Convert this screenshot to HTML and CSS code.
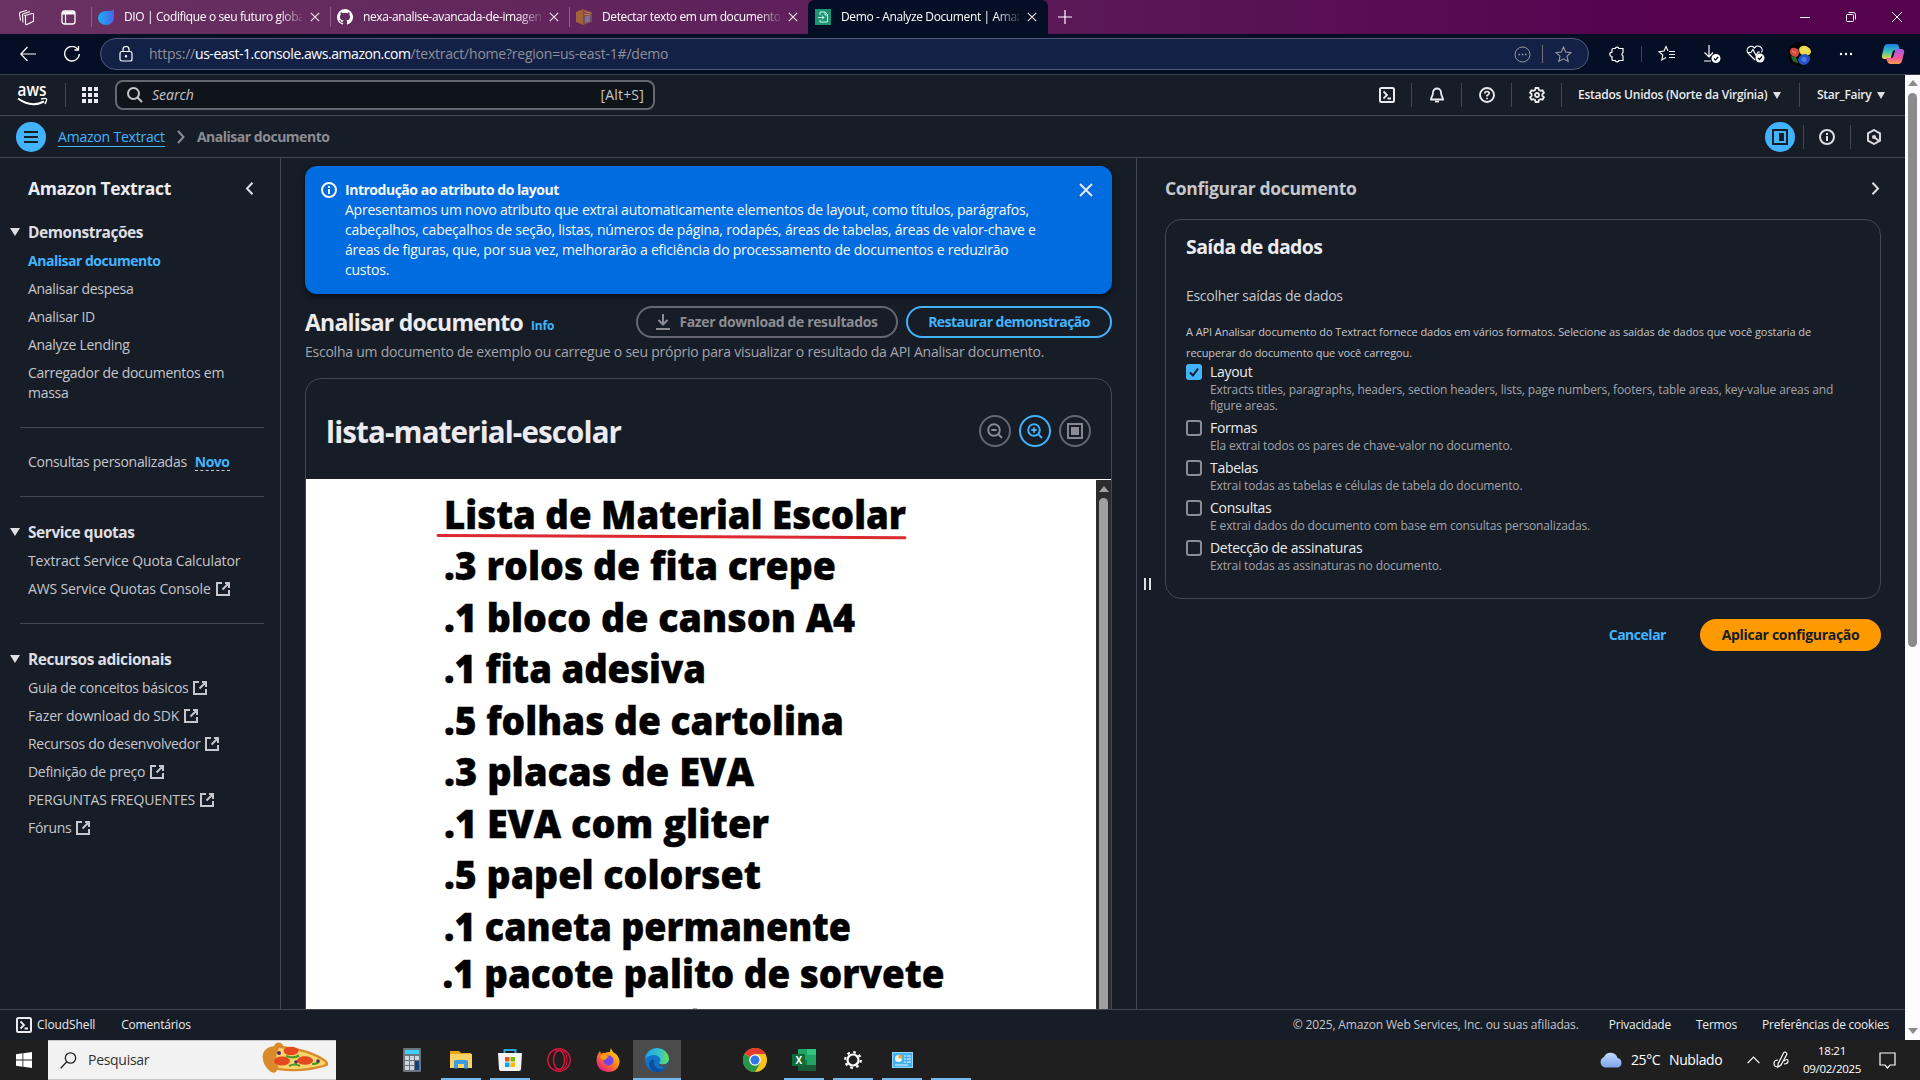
FILE: index.html
```html
<!DOCTYPE html>
<html lang="pt-BR">
<head>
<meta charset="utf-8">
<title>Demo - Analyze Document | Amazon Textract</title>
<link rel="stylesheet" href="styles.css">
</head>
<body>
<svg class="defs" aria-hidden="true">
  <symbol id="ext" viewBox="0 0 16 16"><path d="M7 2H2v12h12V9M10 2h4v5M14 2 7.5 8.5" fill="none" stroke="currentColor" stroke-width="2"/></symbol>
  <symbol id="x" viewBox="0 0 10 10"><path d="M.8.8l8.4 8.4M9.2.8.8 9.2" fill="none" stroke="currentColor" stroke-width="1.2"/></symbol>
  <symbol id="shell" viewBox="0 0 16 16"><rect x="1" y="1" width="14" height="14" rx="1.5" fill="none" stroke="currentColor" stroke-width="2"/><path d="M4.500 4.500 8 8l-3.500 3.500M8.500 11.500h3.500" fill="none" stroke="currentColor" stroke-width="1.800"/></symbol>
  <symbol id="info" viewBox="0 0 16 16"><circle cx="8" cy="8" r="7" fill="none" stroke="currentColor" stroke-width="2"/><path d="M8 7v5M8 4v2" stroke="currentColor" stroke-width="2"/></symbol>
</svg>

<header class="tabs">
  <div class="tabs-lead">
    <svg width="17" height="17" viewBox="0 0 17 17" fill="none" stroke="#fff" stroke-width="1.100"><path d="M7 6.500 14 4.500q1.500-.300 1.500 1v6q0 1-1 1.300l-5.500 2.700q-1.500.500-1.500-1v-7q0-.800-.500-1zM5 13.500l-.500-7.500q0-1 1-1.300L12 2.500M2.500 11.500 1.500 5q-.200-1.300 1-1.700L9 1.200"/></svg>
    <svg width="15" height="15" viewBox="0 0 15 15" fill="none" stroke="#fff"><rect x="1" y="1" width="13" height="13" rx="2.500" stroke-width="1.300"/><path d="M1 3h13" stroke-width="3"/><path d="M4.500 4v10" stroke-width="1.200"/></svg>
  </div>
  <div class="tab">
    <svg class="fav" viewBox="0 0 16 16"><defs><linearGradient id="g1"><stop offset="0" stop-color="#1ab0f5"/><stop offset="1" stop-color="#4b62e8"/></linearGradient></defs><path d="M16 .5V9A8 7 0 1 1 8 2Q13 2.500 16 .5z" fill="url(#g1)"/></svg>
    <span class="tab-name">DIO | Codifique o seu futuro globa</span><svg class="x"><use href="#x"/></svg>
  </div>
  <div class="tab">
    <svg class="fav" viewBox="0 0 16 16"><path fill="#fff" d="M8 0a8 8 0 0 0-2.530 15.590c.4.070.550-.170.550-.380l-.010-1.490c-2 .370-2.530-.490-2.690-.940-.090-.230-.480-.940-.820-1.130-.280-.150-.680-.520-.010-.530.630-.010 1.080.580 1.230.820.720 1.210 1.870.870 2.330.660.070-.520.280-.870.510-1.070-1.780-.2-3.640-.890-3.640-3.950 0-.870.310-1.590.820-2.150-.080-.2-.360-1.020.080-2.120 0 0 .670-.210 2.200.820a7.400 7.400 0 0 1 4 0c1.530-1.040 2.200-.820 2.200-.820.440 1.100.160 1.920.080 2.120.510.560.820 1.270.820 2.150 0 3.070-1.870 3.750-3.650 3.950.290.250.540.730.540 1.480l-.010 2.200c0 .210.150.460.550.380A8 8 0 0 0 8 0z"/></svg>
    <span class="tab-name">nexa-analise-avancada-de-imagen</span><svg class="x"><use href="#x"/></svg>
  </div>
  <div class="tab">
    <svg class="fav" viewBox="0 0 16 16"><path d="M0 3 7 0v16l-7-3z" fill="#a4623a"/><path d="M7 0l9 3v10l-9 3z" fill="#7d4b50"/><path d="M8 2.500l7 1.500M8 5.500l6 0" stroke="#c57b45"/><path d="M9 7l5-.5v6L9 14z" fill="#7773a8"/></svg>
    <span class="tab-name">Detectar texto em um documento</span><svg class="x"><use href="#x"/></svg>
  </div>
  <div class="tab tab-on">
    <svg class="fav" viewBox="0 0 16 16"><path fill="#1f9474" d="M0 0h16v16H0z"/><path d="M5 6V3h5l2.500 2.500V13H5v-2M10 3v3h2.500M3 8.500h6M7 6.500l2 2-2 2" fill="none" stroke="#c9f5e6"/></svg>
    <span class="tab-name">Demo - Analyze Document | Amaz</span><svg class="x"><use href="#x"/></svg>
  </div>
  <svg class="plus" viewBox="0 0 14 14"><path d="M7 0v14M0 7h14" stroke="#fff" stroke-width="1.200"/></svg>
  <div class="win">
    <svg width="46" height="34" stroke="#fff"><path d="M18 17.500h10"/></svg>
    <svg width="46" height="34" fill="none" stroke="#fff"><rect x="18.500" y="14.500" width="7" height="7" rx="1"/><path d="M20.500 12.500h5q2 0 2 2v5"/></svg>
    <svg width="46" height="34" stroke="#fff"><path d="M18 12l10 10M28 12 18 22"/></svg>
  </div>
</header>

<div class="toolbar">
  <svg class="nav1" viewBox="0 0 16 16" fill="none" stroke="#fff" stroke-width="1.200"><path d="M16 8H1M7.500 1 .8 8l6.700 7"/></svg>
  <svg class="nav2" viewBox="0 0 16 16" fill="none" stroke="#fff" stroke-width="1.300"><path d="M14 3.500A7.300 7.300 0 1 0 15.300 8M14.500 0v4h-4"/></svg>
  <div class="address">
    <svg width="14" height="16" viewBox="0 0 14 16" fill="none" stroke="#fff" stroke-width="1.200"><rect x="1" y="5.500" width="12" height="9.500" rx="2"/><path d="M4 5.500V3.500a3 3 0 0 1 6 0v2"/><circle cx="7" cy="10.300" r=".6" fill="#fff"/></svg>
    <span class="url">https://<b>us-east-1.console.aws.amazon.com</b>/textract/home?region=us-east-1#/demo</span>
    <svg width="17" height="17" viewBox="0 0 17 17" fill="none" stroke="#9b99a0"><circle cx="8.500" cy="8.500" r="7.500"/><path d="M4.500 8.500h1.600M7.700 8.500h1.600M10.900 8.500h1.600" stroke-width="1.600"/></svg>
    <i class="asep"></i>
    <svg width="17" height="17" viewBox="0 0 17 17" fill="none" stroke="#9b99a0" stroke-width="1.100"><path d="M8.500 1l2.200 5 5.300.6-4 3.600 1.200 5.300-4.700-2.700-4.700 2.700L5 10.200 1 6.600 6.300 6z"/></svg>
  </div>
  <div class="tools">
    <svg width="18" height="18" viewBox="0 0 18 18" fill="none" stroke="#fff" stroke-width="1.200"><path d="M5 3.500h2.200a2 2 0 0 1 3.800 0H15V7.500a2 2 0 0 0 0 3.500V15.500H11a2 2 0 0 1-3.800 0H5q-1 0-1-1V11.500a2.200 2.200 0 0 1 0-4.400V4.500q0-1 1-1z"/></svg>
    <i class="tsep"></i>
    <svg width="18" height="18" viewBox="0 0 18 18" fill="none" stroke="#fff" stroke-width="1.100"><path d="M10 6 8 1.500 6 6l-5 .6 3.800 3.400L3.800 15 8 12.600M11 6.500h6M11 9.500h6M11 12.500h6"/></svg>
    <svg width="18" height="20" viewBox="0 0 18 20" fill="none" stroke="#fff" stroke-width="1.200"><path d="M6 1v12M1.500 8.500 6 13l4-4.500M1 17h7"/><circle cx="13" cy="14.500" r="4.500" fill="#fff" stroke="none"/><path d="M11 14.500l1.500 1.500 2.600-3" stroke="#050e25"/></svg>
    <svg width="19" height="18" viewBox="0 0 19 18" fill="none" stroke="#fff" stroke-width="1.200"><path d="M9 15 2 8A4 4 0 0 1 8.500 3 4 4 0 0 1 15.500 7.500M1 7.500h4l2-3 3 6 2-3.500h2"/><circle cx="14" cy="13" r="4.500" fill="#fff" stroke="none"/><path d="M12 13l1.500 1.500 2.600-3" stroke="#050e25"/></svg>
    <svg width="24" height="24" viewBox="0 0 24 24"><circle cx="12" cy="12" r="12" fill="#050505"/><path d="M2 9q1-4 5-3 4 1 4 4 0 5-4 5-5-1-5-6z" fill="#d8493e"/><path d="M11 7q2-4 7-3 5 2 5 6-1 4-6 3.500Q11 13 11 7z" fill="#e9dc4b"/><path d="M3 14l5 1 2 6q-6 0-7-7z" fill="#1f6a2e"/><path d="M10 17q2-5 8-5 5 2 4 6-2 5-7 5-5-1-5-6z" fill="#2350c4"/><circle cx="16" cy="17.500" r="2.500" fill="#4b7ae6"/><path d="M15 6l4 3M4 9l4 2" stroke="#fff" fill="none" opacity=".4"/></svg>
    <svg width="14" height="4" fill="#fff"><circle cx="2" cy="2" r="1.200"/><circle cx="7" cy="2" r="1.200"/><circle cx="12" cy="2" r="1.200"/></svg>
    <svg width="24" height="22" viewBox="0 0 24 22"><defs><linearGradient id="c1" x2="0" y2="1"><stop offset="0" stop-color="#1b7be8"/><stop offset=".5" stop-color="#36c3b5"/><stop offset="1" stop-color="#f4d53a"/></linearGradient><linearGradient id="c2" x2="0" y2="1"><stop offset="0" stop-color="#a65cf0"/><stop offset=".6" stop-color="#f0569a"/><stop offset="1" stop-color="#ff9a4c"/></linearGradient></defs><path d="M6 1h9q2.500 0 3 3l.8 3H14q-2 0-2.500 2L9.500 16H4Q0 16 1 12L3 4q.800-3 3-3z" fill="url(#c1)"/><path d="M18 21H9q-2 0-3-3l-1-3h5q2 0 2.500-2l2-7H20q4 0 3 4l-2 8q-.800 3-3 3z" fill="url(#c2)"/></svg>
  </div>
</div>

<div class="viewport">
<div class="page">
  <div class="awsbar">
    <svg class="awslogo" viewBox="0 0 31 21"><text x="0.500" y="10.500" class="awsword" textLength="29" lengthAdjust="spacingAndGlyphs">aws</text><path d="M1 13.500q13 9.500 26 3" fill="none" stroke="#fff" stroke-width="2"/><path d="M24 14q5-1 5.500 0t-1.500 5" fill="none" stroke="#fff" stroke-width="1.400"/></svg>
    <i class="vsep"></i>
    <svg class="apps" viewBox="0 0 16 16" fill="#ebebf0"><path d="M0 0h4v4H0zM6 0h4v4H6zM12 0h4v4h-4zM0 6h4v4H0zM6 6h4v4H6zM12 6h4v4h-4zM0 12h4v4H0zM6 12h4v4H6zM12 12h4v4h-4z"/></svg>
    <div class="search">
      <svg width="16" height="16" viewBox="0 0 16 16" fill="none" stroke="#c6c6cd" stroke-width="2"><circle cx="6.500" cy="6.500" r="5.500"/><path d="M10.500 10.500 15 15"/></svg>
      <em>Search</em><span>[Alt+S]</span>
    </div>
    <div class="awsright">
      <span class="cell"><svg class="i16"><use href="#shell"/></svg></span>
      <span class="cell"><svg class="i16" viewBox="0 0 16 16" fill="none" stroke="currentColor" stroke-width="1.800"><path d="M8 1.500a4 4 0 0 0-4 4c0 3.500-2 4.500-2 7h12c0-2.500-2-3.500-2-7a4 4 0 0 0-4-4z"/><path d="M6 14.500h4"/></svg></span>
      <span class="cell"><svg class="i16" viewBox="0 0 16 16" fill="none" stroke="currentColor" stroke-width="1.900"><circle cx="8" cy="8" r="7"/><path d="M5.800 6.500Q5.800 4.500 8 4.500t2.200 1.800Q10.200 7.500 8 8.500v1M8 10.700v1.600" stroke-width="1.700"/></svg></span>
      <span class="cell"><svg class="i16" viewBox="0 0 16 16" fill="none" stroke="currentColor" stroke-width="1.800"><path d="M6.600 1h2.800l.5 2 1.600.9 2-.6 1.400 2.400-1.500 1.400v1.800l1.500 1.400-1.400 2.400-2-.6-1.600.9-.5 2H6.600l-.5-2-1.600-.9-2 .6L1.100 10.300l1.500-1.400V7.100L1.100 5.700l1.400-2.400 2 .6L6.100 3z"/><circle cx="8" cy="8" r="2"/></svg></span>
      <span class="cell region"><span class="t">Estados Unidos (Norte da Virgínia)</span><i class="caret c8"></i></span>
      <span class="cell user"><span class="t">Star_Fairy</span><i class="caret c8"></i></span>
    </div>
  </div>

  <div class="crumbs">
    <span class="round"><svg width="14" height="12" stroke="#161d26" stroke-width="2"><path d="M0 1h14M0 6h14M0 11h14"/></svg></span>
    <a class="crumb-link">Amazon Textract</a>
    <svg width="8" height="14" viewBox="0 0 8 14" fill="none" stroke="#8c8c94" stroke-width="2"><path d="M1 1l5.500 6L1 13"/></svg>
    <b class="crumb-now">Analisar documento</b>
    <div class="crumb-right">
      <span class="round"><svg width="16" height="16" viewBox="0 0 16 16"><rect x="1" y="1" width="14" height="14" fill="none" stroke="#161d26" stroke-width="2"/><path d="M7 4h5v8H7z" fill="#161d26"/></svg></span>
      <span class="cell2"><svg class="i16"><use href="#info"/></svg></span>
      <span class="cell2"><svg class="i16" viewBox="0 0 16 16" fill="none" stroke="currentColor" stroke-width="1.900"><path d="M8 1l6 3.400v7.200L8 15l-6-3.400V4.400z"/><circle cx="8" cy="8" r="2" fill="currentColor" stroke="none"/><path d="M8 8l4.500 3.500"/></svg></span>
    </div>
  </div>

  <div class="body">
    <nav class="side">
      <div class="side-title">Amazon Textract<svg width="9" height="13" viewBox="0 0 9 13" fill="none" stroke="#dedee3" stroke-width="2"><path d="M7.500.8 2 6.500l5.500 5.700"/></svg></div>
      <div class="side-h"><i class="caret c10"></i>Demonstrações</div>
      <ul>
        <li class="on">Analisar documento</li><li>Analisar despesa</li><li>Analisar ID</li><li>Analyze Lending</li><li>Carregador de documentos em massa</li>
      </ul>
      <hr>
      <div class="side-solo"><span>Consultas personalizadas</span><b>Novo</b></div>
      <hr class="wide">
      <div class="side-h"><i class="caret c10"></i>Service quotas</div>
      <ul>
        <li class="loose">Textract Service Quota Calculator</li><li class="loose">AWS Service Quotas Console<svg><use href="#ext"/></svg></li>
      </ul>
      <hr class="wide">
      <div class="side-h"><i class="caret c10"></i>Recursos adicionais</div>
      <ul>
        <li>Guia de conceitos básicos<svg><use href="#ext"/></svg></li><li class="loose">Fazer download do SDK<svg><use href="#ext"/></svg></li><li>Recursos do desenvolvedor<svg><use href="#ext"/></svg></li><li>Definição de preço<svg><use href="#ext"/></svg></li><li class="loose">PERGUNTAS FREQUENTES<svg><use href="#ext"/></svg></li><li>Fóruns<svg><use href="#ext"/></svg></li>
      </ul>
    </nav>

    <main class="main">
      <div class="banner">
        <svg class="i16"><use href="#info"/></svg>
        <div class="banner-text"><b>Introdução ao atributo do layout</b><br><span class="t">Apresentamos um novo atributo que extrai automaticamente elementos de layout, como títulos, parágrafos,</span><br><span class="t">cabeçalhos, cabeçalhos de seção, listas, números de página, rodapés, áreas de tabelas, áreas de valor-chave e</span><br><span class="t">áreas de figuras, que, por sua vez, melhorarão a eficiência do processamento de documentos e reduzirão</span><br>custos.</div>
        <svg class="bx" viewBox="0 0 14 14" stroke="#ebebf0" stroke-width="1.900"><path d="M1 1l12 12M13 1 1 13"/></svg>
      </div>
      <div class="head">
        <h1>Analisar documento</h1><b class="infolink">Info</b>
        <span class="btn btn-off"><svg width="14" height="16" viewBox="0 0 14 16" fill="none" stroke="currentColor" stroke-width="2"><path d="M7 0v10M2.500 6 7 10.500 11.500 6M0 15h14"/></svg><span class="t">Fazer download de resultados</span></span>
        <span class="btn btn-line"><span class="t">Restaurar demonstração</span></span>
      </div>
      <p class="sub"><span class="t">Escolha um documento de exemplo ou carregue o seu próprio para visualizar o resultado da API Analisar documento.</span></p>
      <section class="doc">
        <div class="doc-head">
          <h2>lista-material-escolar</h2>
          <span class="zb"><svg class="i16" viewBox="0 0 16 16" fill="none" stroke="currentColor" stroke-width="1.900"><circle cx="7" cy="7" r="5.800"/><path d="M11.200 11.200 15 15M4.300 7h5.400"/></svg></span>
          <span class="zb zb-on"><svg class="i16" viewBox="0 0 16 16" fill="none" stroke="currentColor" stroke-width="1.900"><circle cx="7" cy="7" r="5.800"/><path d="M11.200 11.200 15 15M4.300 7h5.400M7 4.300v5.400"/></svg></span>
          <span class="zb"><svg class="i16" viewBox="0 0 16 16"><rect x="1" y="1" width="14" height="14" fill="none" stroke="currentColor" stroke-width="1.900"/><path d="M4 4h8v8H4z" fill="currentColor"/></svg></span>
        </div>
        <div class="doc-view">
          <svg class="paper" viewBox="0 0 790 530">
            <text x="138" y="50" textLength="462" lengthAdjust="spacingAndGlyphs">Lista de Material Escolar</text>
            <path d="M132 56.500 599 58.700" stroke="#dc2a33" stroke-width="3" stroke-linecap="round"/>
            <text x="138" y="101" textLength="392" lengthAdjust="spacingAndGlyphs">.3 rolos de fita crepe</text>
            <text x="138" y="152.500" textLength="411" lengthAdjust="spacingAndGlyphs">.1 bloco de canson A4</text>
            <text x="138" y="204" textLength="262" lengthAdjust="spacingAndGlyphs">.1 fita adesiva</text>
            <text x="138" y="255.500" textLength="400" lengthAdjust="spacingAndGlyphs">.5 folhas de cartolina</text>
            <text x="138" y="307" textLength="310" lengthAdjust="spacingAndGlyphs">.3 placas de EVA</text>
            <text x="138" y="359" textLength="325" lengthAdjust="spacingAndGlyphs">.1 EVA com gliter</text>
            <text x="138" y="410" textLength="317" lengthAdjust="spacingAndGlyphs">.5 papel colorset</text>
            <text x="138" y="462" textLength="407" lengthAdjust="spacingAndGlyphs">.1 caneta permanente</text>
            <text x="136.500" y="509" textLength="502" lengthAdjust="spacingAndGlyphs">.1 pacote palito de sorvete</text>
            <path d="M387 529.500h4" stroke="#aaa"/>
          </svg>
          <div class="dbar"><i class="up"></i><i class="thumb"></i></div>
        </div>
      </section>
    </main>

    <aside class="panel">
      <div class="grip"><i></i><i></i></div>
      <div class="panel-in">
        <div class="panel-title"><span class="t">Configurar documento</span><svg width="9" height="13" viewBox="0 0 9 13" fill="none" stroke="#dedee3" stroke-width="2"><path d="M1.500.8 7 6.500l-5.500 5.700"/></svg></div>
        <section class="card">
          <h3><span class="t">Saída de dados</span></h3>
          <p class="choose"><span class="t">Escolher saídas de dados</span></p>
          <p class="api"><span class="t">A API Analisar documento do Textract fornece dados em vários formatos. Selecione as saídas de dados que você gostaria de</span><br>recuperar do documento que você carregou.</p>
          <div class="opt"><i class="box box-on"><svg width="16" height="16" viewBox="0 0 16 16"><path d="M4 8.500 7 11.500 12 4.500" fill="none" stroke="#161d26" stroke-width="2"/></svg></i><div><span class="t">Layout</span><small><span class="t">Extracts titles, paragraphs, headers, section headers, lists, page numbers, footers, table areas, key-value areas and</span><br>figure areas.</small></div></div>
          <div class="opt"><i class="box"></i><div><span class="t">Formas</span><small><span class="t">Ela extrai todos os pares de chave-valor no documento.</span></small></div></div>
          <div class="opt"><i class="box"></i><div><span class="t">Tabelas</span><small>Extrai todas as tabelas e células de tabela do documento.</small></div></div>
          <div class="opt"><i class="box"></i><div><span class="t">Consultas</span><small><span class="t">E extrai dados do documento com base em consultas personalizadas.</span></small></div></div>
          <div class="opt"><i class="box"></i><div><span class="t">Detecção de assinaturas</span><small>Extrai todas as assinaturas no documento.</small></div></div>
        </section>
        <div class="actions"><b class="cancel">Cancelar</b><span class="btn btn-go"><span class="t">Aplicar configuração</span></span></div>
      </div>
    </aside>
  </div>

  <footer class="foot">
    <svg class="i16"><use href="#shell"/></svg><span class="f1">CloudShell</span><span class="f2">Comentários</span>
    <span class="f3">© 2025, Amazon Web Services, Inc. ou suas afiliadas.</span><span class="f4">Privacidade</span><span class="f5">Termos</span><span class="f6">Preferências de cookies</span>
  </footer>
</div>
<div class="vbar"><i class="up"></i><i class="thumb"></i><i class="down"></i></div>
</div>

<div class="taskbar">
  <svg class="start" viewBox="0 0 16 16" fill="#fff"><path d="M0 2.200 6.500 1.300V7.600H0zM7.300 1.200 16 0v7.600H7.300zM0 8.400h6.500v6.300L0 13.800zM7.300 8.400H16V16l-8.700-1.200z"/></svg>
  <div class="find">
    <svg width="17" height="17" viewBox="0 0 17 17" fill="none" stroke="#222" stroke-width="1.300"><circle cx="10.500" cy="6" r="5.200"/><path d="M6.800 9.700.7 16.300"/></svg>
    <span class="findt">Pesquisar</span>
    <svg width="67" height="31" viewBox="0 0 67 31"><path d="M12 4Q14-1 19 1q2 1 2 3 28 3 43 14 4 4 1 6-24 8-50 4-1 4-6 2Q-1 22 1 12 3 5 12 4z" fill="#d98a2b"/><path d="M17 6q28 2 46 14 1 2-2 3-24 6-44 3-6-8 0-20z" fill="#fbd46c"/><ellipse cx="29" cy="9" rx="7.500" ry="4.200" fill="#e4481f"/><ellipse cx="20" cy="19" rx="8" ry="4.500" fill="#e4481f"/><ellipse cx="43" cy="18.500" rx="8" ry="4.300" fill="#e4481f"/><path d="M24 14q8 3 13-.500M27 24q6-3 11 0M50 22q5 0 7-2" stroke="#4a9a2c" stroke-width="2.200" fill="none"/><circle cx="17" cy="11" r="2" fill="#4b2c6b"/><circle cx="56" cy="19" r="1.800" fill="#4b2c6b"/><circle cx="34" cy="20" r="1.800" fill="#4b2c6b"/></svg>
  </div>
  <div class="apps-row">
    <span class="app"><svg width="18" height="24" viewBox="0 0 18 24"><rect width="18" height="24" rx="1" fill="#6a7580"/><path fill="#3fd0f5" d="M2 2h14v4H2z"/><path fill="#cfd6dc" d="M2 8h4v4H2zM7 8h4v4H7zM12 8h4v4h-4zM2 13h4v4H2zM7 13h4v4H7zM2 18h4v4H2zM7 18h4v4H7z"/><path fill="#12427e" d="M12 13h4v9h-4z"/></svg></span>
    <span class="app run"><svg width="22" height="18" viewBox="0 0 22 18"><path fill="#e8a50e" d="M0 0h9l2 2h10v5H0z"/><path fill="#fbd264" d="M0 3h22v14H0z"/><path fill="#3f9be0" d="M4 17.500v-7q0-1.500 1.500-1.500h11q1.500 0 1.500 1.500v7h-4V13H8v4.500z"/></svg></span>
    <span class="app run"><svg width="24" height="24" viewBox="0 0 24 24"><path d="M6.500 7V2h11v5" fill="none" stroke="#2aa7e0" stroke-width="2"/><path fill="#f4f4f4" d="M0 5h24l-1 16q0 2-2 2H3q-2 0-2-2z"/><path fill="#f25022" d="M7 9h4.500v4.500H7z"/><path fill="#7fba00" d="M12.500 9H17v4.500h-4.500z"/><path fill="#00a4ef" d="M7 14.500h4.500V19H7z"/><path fill="#ffb900" d="M12.500 14.500H17V19h-4.500z"/></svg></span>
    <span class="app"><svg width="24" height="24" viewBox="0 0 24 24" fill="none" stroke="#d8163c" stroke-width="1.400"><circle cx="12" cy="12" r="11.200"/><ellipse cx="12" cy="12" rx="5.500" ry="9.500"/><path d="M8 3q12-3 12 9t-12 9" stroke-width="1"/></svg></span>
    <span class="app"><svg width="24" height="24" viewBox="0 0 24 24"><defs><linearGradient id="ff" x1="1" x2=".2" y2="1"><stop offset="0" stop-color="#ffe226"/><stop offset=".5" stop-color="#ff8a16"/><stop offset="1" stop-color="#e31587"/></linearGradient></defs><path d="M15 0q1 4 5 6 4 4 3.500 9Q22 24 12 24 1 23 .500 13 .500 7 4 3l1 3q2-2 4-1 1-1 5-1 0-2 1-4z" fill="url(#ff)"/><circle cx="12.500" cy="12.500" r="5" fill="#7542e5"/><path d="M4 8q5-2 9 1-3 1-4 3-4 0-5-4z" fill="#ff9c1a"/></svg></span>
    <span class="app run active"><svg width="24" height="24" viewBox="0 0 24 24"><defs><linearGradient id="e1" x2="1"><stop offset="0" stop-color="#1fa2e8"/><stop offset=".6" stop-color="#35c1c9"/><stop offset="1" stop-color="#6ee04c"/></linearGradient></defs><circle cx="12" cy="12" r="12" fill="#1271c9"/><path d="M.2 11Q1 1 12 0q11 1 12 11-.500 5-6 5.500-4 0-4-2 2-1 1-4-2-4-7-3.500Q2 8 .2 11z" fill="url(#e1)"/><path d="M9 12q-1 8 6 9 3 .500 7-2-4 5-10 5-8-1-8-8 1-5 5-4z" fill="#0c4f9e"/><path d="M14 14.500q0 2 4 2 3.500 0 5.500-2.500-.5 3-2 4.800-4 1-7-1-1.800-1.500-.5-3.300z" fill="#4b4b4b"/></svg></span>
    <span class="app"></span>
    <span class="app"><svg width="24" height="24" viewBox="0 0 24 24"><circle cx="12" cy="12" r="12" fill="#fcc31e"/><path d="M1.600 6A12 12 0 0 0 12 24l5.200-9L12 12z" fill="#24974b"/><path d="M1.600 6h.6L12 12V6h10.400A12 12 0 0 0 1.600 6z" fill="#e33b2e"/><circle cx="12" cy="12" r="5.800" fill="#fff"/><circle cx="12" cy="12" r="4.500" fill="#2f77e8"/></svg></span>
    <span class="app run"><svg width="24" height="22" viewBox="0 0 24 22"><path fill="#21a366" d="M6 0h18v22H6z"/><path fill="#33c481" d="M15 0h9v6h-9z"/><path fill="#107c41" d="M6 11h9v5H6z"/><path fill="#185c37" d="M6 16h18v6H6z"/><path fill="#0e6c38" d="M0 5h13v12H0z"/><text x="3.500" y="15" class="xl">X</text></svg></span>
    <span class="app run"><svg width="18" height="18" viewBox="0 0 18 18" fill="none" stroke="#fff"><circle cx="9" cy="9" r="5.500" stroke-width="2.200"/><circle cx="9" cy="9" r="7.800" stroke-width="2.200" stroke-dasharray="2.700 3.426"/></svg></span>
    <span class="app run"><svg width="21" height="16" viewBox="0 0 21 16"><path fill="#8fd8fb" d="M0 0h21v16H0z"/><path d="M1 1h19v14H1z" fill="#45b0ee"/><circle cx="6.500" cy="6.500" r="3.500" fill="#e9f7ff"/><path d="M6.500 6.500V2.500a4 4 0 0 1 4 4z" fill="#f6a821"/><path d="M12 4h2m1 0h4M12 7h2m1 0h4M12 10h2m1 0h4M3 13h13" stroke="#e9f7ff"/></svg></span>
    <span class="app run"></span>
  </div>
  <div class="tray">
    <svg width="24" height="16" viewBox="0 0 24 16"><defs><linearGradient id="cl" x2="0" y2="1"><stop offset="0" stop-color="#c3dafb"/><stop offset="1" stop-color="#7ba5ec"/></linearGradient></defs><path d="M6 15.500a5.500 5.500 0 0 1-1-10.500 7.200 7.200 0 0 1 13.500 1A4.900 4.900 0 0 1 19 15.500z" fill="url(#cl)"/></svg>
    <span class="temp">25°C</span><span class="cond">Nublado</span>
    <svg class="chev" width="13" height="8" viewBox="0 0 13 8" fill="none" stroke="#fff" stroke-width="1.200"><path d="M.6 7.200 6.500 1l5.900 6.200"/></svg>
    <svg class="pen" width="16" height="18" viewBox="0 0 16 18" fill="none" stroke="#fff" stroke-width="1.200"><path d="M5 13 10.500 2q1.500-2 3 0 .500 1 0 2L8 14l-3 2zM5 9Q1 9 1 12.500T5 16M11 10q4-3 4 0t-4 3"/></svg>
    <div class="clock"><span>18:21</span><span>09/02/2025</span></div>
    <svg class="note" width="17" height="17" viewBox="0 0 17 17" fill="none" stroke="#fff" stroke-width="1.200"><path d="M1 1h15v12h-5l-2.500 3L6 13H1z"/></svg>
  </div>
</div>
</body>
</html>
```
FILE: styles.css
```css
* { box-sizing: border-box; }
body { margin: 0; width: 1920px; height: 1080px; overflow: hidden; background: #161d26; color: #c6c6cd; font: 14px/20px "Open Sans", "Noto Sans", sans-serif; letter-spacing: -.29px; }
b { letter-spacing: -.48px; }
svg { display: block; flex: none; }
h1, h2, h3, p, ul, hr { margin: 0; padding: 0; }
ul { list-style: none; }
.defs { position: absolute; width: 0; height: 0; }
.t, .tab-name, .url { white-space: nowrap; }
.i16 { width: 16px; height: 16px; }

.tabs { display: flex; align-items: center; height: 34px; background: linear-gradient(90deg, #6a3262, #5c1c59 50%, #55044f 85%, #55024f); color: #fff; font-size: 12px; }
.tabs-lead { display: flex; align-items: center; gap: 26px; width: 91px; padding-left: 18px; }
.tab { display: flex; align-items: center; width: 239px; height: 34px; padding-left: 6px; }
.tab::before { content: ""; width: 1px; height: 20px; margin-left: -6px; margin-right: 6px; background: #8f5d8b; }
.tab-on { width: 240px; background: #040e24; border-radius: 6px 6px 0 0; }
.tab-on::before { background: none; }
.fav { width: 16px; height: 16px; margin-right: 10px; }
.tab-name { width: 178px; overflow: hidden; letter-spacing: -.38px; -webkit-mask: linear-gradient(90deg, #000 155px, transparent 182px); mask: linear-gradient(90deg, #000 155px, transparent 182px); }
.x { width: 10px; height: 10px; margin-left: 8px; color: #e8e0e8; }
.plus { width: 14px; height: 14px; margin-left: 10px; }
.win { display: flex; margin-left: auto; }

.toolbar { display: flex; align-items: center; height: 41px; background: #040e24; border-bottom: 1px solid #3a4152; }
.nav1 { width: 16px; height: 16px; margin-left: 20px; }
.nav2 { width: 16px; height: 16px; margin: 0 20px 0 28px; }
.address { display: flex; align-items: center; width: 1489px; height: 32px; padding: 0 16px 0 18px; border: 1px solid #515b77; border-radius: 16px; background: #142146; }
.url { margin: 0 auto 0 16px; color: #8f8f96; letter-spacing: -.22px; }
.url b { color: #fff; font-weight: 400; letter-spacing: -.45px; }
.asep { width: 1px; height: 18px; margin: 0 12px 0 11px; background: #6f6f78; }
.tools { display: flex; align-items: center; margin-left: 19px; }
.tools svg:nth-of-type(2) { margin: 0 27px 0 16px; }
.tsep { width: 1px; height: 16px; margin-left: 15px; background: #3d4457; }
.tools svg:nth-of-type(3) { margin-right: 25px; }
.tools svg:nth-of-type(4) { margin-right: 23px; }
.tools svg:nth-of-type(5) { margin-right: 27px; }
.tools svg:nth-of-type(6) { margin-right: 28px; }

.viewport { display: flex; height: 965px; }
.page { width: 1905px; display: flex; flex-direction: column; background: #161d26; }
.awsbar { display: flex; align-items: center; height: 41px; border-bottom: 1px solid #424650; padding-left: 17px; }
.awslogo { width: 31px; height: 21px; }
.awsword { fill: #fff; font: 600 18px "Open Sans", sans-serif; letter-spacing: 0; }
.vsep { width: 1px; height: 24px; margin: 0 16px 0 17px; background: #424650; }
.apps { width: 16px; height: 16px; }
.search { display: flex; align-items: center; width: 540px; height: 30px; margin-left: 17px; padding: 0 9px 0 10px; border: 2px solid #656871; border-radius: 8px; background: #0f141a; color: #c6c6cd; letter-spacing: 0; }
.search em { margin: 0 auto 0 9px; }
.search span { letter-spacing: .2px; }
.awsright { display: flex; margin-left: auto; color: #ebebf0; font-size: 12px; font-weight: 600; height: 24px; letter-spacing: -.24px; }
.cell { display: flex; align-items: center; justify-content: center; width: 50px; border-right: 1px solid #424650; }
.awsright .region { width: 238px; gap: 6px; justify-content: flex-start; padding-left: 16px; }
.awsright .user { width: 105px; border: 0; gap: 6px; justify-content: flex-start; padding-left: 17px; }
.caret { width: 0; height: 0; border: solid transparent; border-bottom: 0; border-top-color: #dedee3; flex: none; }
.c8 { border-width: 7px 4px 0; }
.c10 { border-width: 8px 5px 0; }

.crumbs { display: flex; align-items: center; height: 42px; padding-left: 16px; border-bottom: 1px solid #424650; }
.round { display: flex; align-items: center; justify-content: center; width: 30px; height: 30px; border-radius: 50%; background: #42b4ff; }
.crumb-link { margin: 0 12px; color: #42b4ff; border-bottom: 1px solid #42b4ff; line-height: 19px; letter-spacing: -.2px; }
.crumb-now { margin-left: 12px; color: #8c8c94; }
.crumb-right { display: flex; align-items: center; margin-left: auto; padding-right: 8px; color: #dedee3; }
.cell2 { display: flex; align-items: center; justify-content: center; width: 47px; height: 24px; border-left: 1px solid #424650; }
.crumb-right .round { margin-right: 8px; }

.body { display: flex; height: 851px; overflow: hidden; }
.side { width: 281px; border-right: 1px solid #424650; padding: 18px 16px 0 20px; }
.side-title { display: flex; align-items: center; justify-content: space-between; height: 24px; padding: 0 10px 0 8px; color: #ebebf0; font-size: 17.5px; font-weight: 700; letter-spacing: -.38px; }
.side-h { display: flex; align-items: center; gap: 8px; height: 20px; margin-left: -10px; color: #dedee3; font-size: 15.5px; font-weight: 700; letter-spacing: -.45px; }
.side-title + .side-h { margin-top: 22px; }
.side li { display: flex; align-items: center; margin: 8px 0 0 8px; line-height: 20px; }
.side li.loose { letter-spacing: -.14px; }
.side .side-h + ul { padding-top: 1px; }
.side li svg { width: 16px; height: 16px; margin-left: 4px; }
.side .on { color: #42b4ff; font-weight: 700; letter-spacing: -.48px; }
.side hr { border: 0; border-top: 1px solid #424650; margin: 24px 0; }
.side hr.wide { margin-bottom: 25px; }
.side-solo { display: flex; height: 20px; margin-left: 8px; }
.side-solo b { height: 19px; margin-left: 8px; color: #42b4ff; border-bottom: 1px dashed #c6c6cd; }

.main { width: 855px; padding: 8px 0 0 24px; }
.banner { display: flex; width: 807px; height: 128px; padding: 14px 19px 0 16px; border-radius: 12px; background: #006ce0; color: #f9f9fa; box-shadow: 0 3px 6px #0b1018; }
.banner > .i16 { margin: 2px 8px 0 0; }
.banner-text { font-weight: 500; letter-spacing: -.23px; }
.bx { width: 14px; height: 14px; margin: 3px 0 0 auto; }
.head { display: flex; align-items: center; width: 807px; height: 32px; margin-top: 12px; }
h1 { margin-top: -1px; color: #ebebf0; font-size: 23px; line-height: 30px; white-space: nowrap; letter-spacing: -.77px; }
.infolink { margin: 8px auto 0 8px; color: #42b4ff; font-size: 12px; letter-spacing: -.2px; }
.btn { display: flex; align-items: center; justify-content: center; height: 32px; border-radius: 16px; font-weight: 700; border: 2px solid; letter-spacing: -.38px; }
.btn-off { width: 262px; gap: 9px; color: #8c8c94; border-color: #656871; }
.btn-line { width: 206px; margin-left: 8px; color: #42b4ff; letter-spacing: -.56px; }
.sub { margin-top: 4px; color: #a4a4ad; letter-spacing: -.24px; }
.doc { width: 807px; height: 700px; margin-top: 16px; border: 1px solid #424650; border-radius: 16px 16px 0 0; }
.doc-head { display: flex; align-items: center; height: 100px; padding: 4px 20px 0 20px; gap: 8px; }
h2 { margin: 2px auto 0 0; color: #ebebf0; font-size: 29.5px; line-height: 36px; letter-spacing: -.87px; }
.zb { display: flex; align-items: center; justify-content: center; width: 32px; height: 32px; border: 2px solid #656871; border-radius: 50%; color: #8c8c94; }
.zb-on { border-color: #42b4ff; color: #42b4ff; }
.doc-view { display: flex; background: #fff; height: 530px; }
.paper { width: 790px; height: 530px; }
.paper text { font: 800 38px "Open Sans", sans-serif; letter-spacing: 0; fill: #000; stroke: #000; stroke-width: .4px; }
.dbar { width: 15px; margin-top: 1px; background: #2c2c2c; }
.dbar .up { display: block; width: 0; margin: 6px auto 0; border: 5px solid transparent; border-top: 0; border-bottom: 6px solid #9f9f9f; }
.dbar .thumb { display: block; width: 9px; height: 540px; margin: 6px auto 0; border-radius: 5px; background: #9f9f9f; }

.panel { display: flex; width: 769px; border-left: 1px solid #424650; }
.grip { display: flex; gap: 3px; width: 28px; padding: 420px 0 0 7px; }
.grip i { width: 2px; height: 12px; background: #dedee3; }
.panel-in { width: 716px; padding-top: 20px; }
.panel-title { display: flex; align-items: center; justify-content: space-between; height: 20px; padding-right: 1px; color: #c6c6cd; font-size: 17.5px; font-weight: 700; letter-spacing: -.32px; }
.card { height: 380px; margin-top: 21px; padding: 15px 20px 0; border: 1px solid #424650; border-radius: 16px; }
h3 { color: #ebebf0; font-size: 19.5px; line-height: 24px; letter-spacing: -.6px; }
.choose { margin-top: 27px; }
.api { margin-top: 15px; font-size: 11px; font-weight: 500; line-height: 21px; letter-spacing: -.08px; }
.opt { display: flex; gap: 8px; height: 40px; margin-top: 0; color: #ebebf0; font-weight: 500; }
.api + .opt { height: 56px; margin-top: -1px; }
.opt small { display: block; color: #a4a4ad; font-size: 12px; line-height: 16px; font-weight: 400; letter-spacing: -.13px; }
.box { width: 16px; height: 16px; margin-top: 2px; border: 2px solid #8c8c94; border-radius: 3px; }
.box-on { border: 0; background: #42b4ff; }
.actions { display: flex; justify-content: flex-end; align-items: center; margin-top: 20px; gap: 34px; }
.cancel { color: #42b4ff; }
.btn-go { width: 181px; border: 0; background: #ff9900; color: #161d26; letter-spacing: -.3px; }

.foot { display: flex; align-items: center; height: 31px; border-top: 1px solid #424650; padding-left: 16px; color: #ebebf0; font-size: 12px; font-weight: 500; white-space: nowrap; letter-spacing: -.22px; }
.f1 { margin-left: 5px; letter-spacing: -.1px; }
.f2 { margin-left: 26px; }
.f3 { margin-left: auto; color: #c6c6cd; font-weight: 400; letter-spacing: -.15px; }
.f4 { margin-left: 30px; }
.f5 { margin-left: 25px; }
.f6 { margin: 0 16px 0 25px; }

.vbar { display: flex; flex-direction: column; align-items: center; width: 15px; background: #fcfcfc; }
.vbar .up { border: 5px solid transparent; border-top: 0; border-bottom: 6px solid #8b8b8b; margin-top: 5px; }
.vbar .thumb { width: 9px; height: 554px; margin-top: 7px; border-radius: 5px; background: #8b8b8b; }
.vbar .down { border: 5px solid transparent; border-bottom: 0; border-top: 6px solid #8b8b8b; margin: auto 0 6px; }

.taskbar { display: flex; height: 40px; background: #1f1f1f; color: #fff; }
.start { width: 16px; height: 16px; margin: 12px 16px; }
.find { display: flex; align-items: center; width: 288px; padding: 0 7px 0 12px; background: #f2f2f2; border: solid #c8c8c8; border-width: 1px 0; color: #333; }
.findt { margin: 0 auto 0 11px; }
.find svg:last-child { margin-top: -6px; }
.apps-row { display: flex; gap: 1px; margin-left: 52px; }
.app { display: flex; align-items: center; justify-content: center; width: 48px; height: 40px; }
.run { background: linear-gradient(#76b9ed, #76b9ed) center bottom / 40px 2px no-repeat; }
.active { background-color: #4b4b4b; background-size: 48px 2px; }
.xl { font: 700 10px "Open Sans", sans-serif; fill: #fff; }
.tray { display: flex; align-items: center; margin-left: auto; padding-right: 24px; font-size: 14px; letter-spacing: -.4px; white-space: nowrap; }
.temp { width: 30px; margin-left: 8px; }
.cond { width: 54px; margin-left: 8px; }
.chev { margin-left: 24px; }
.pen { margin-left: 13px; }
.clock { display: flex; flex-direction: column; align-items: center; width: 60px; margin: 0 17px 0 13px; font-size: 11.5px; line-height: 18px; letter-spacing: -.3px; }
```
